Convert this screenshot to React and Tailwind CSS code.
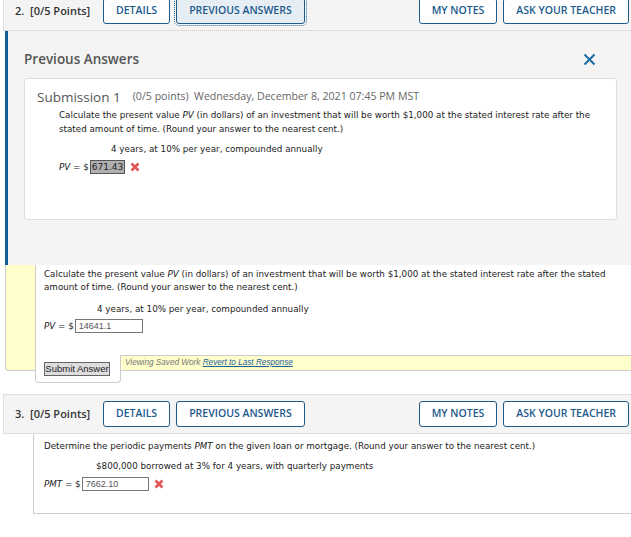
import React from 'react'

const open = { fontFamily: '"Open Sans", "Noto Sans", sans-serif' }
const body = { fontFamily: '"DejaVu Sans", Verdana, sans-serif' }
const arial = { fontFamily: '"Liberation Sans", Arial, sans-serif' }

function RedX() {
    return (
        <svg width="10" height="10" viewBox="0 0 10 10" className="ml-[5px] shrink-0">
            <path d="M1.5 1.5 L8.5 8.5 M8.5 1.5 L1.5 8.5" stroke="#e45656" strokeWidth="2.6" />
        </svg>
    )
}

function HeaderBar({ number, active, className }) {
    const btn = "h-[26px] px-[12px] border border-[#1f5a88] rounded-[3px] text-[10.5px] font-semibold text-[#1c5a8c] flex items-center"
    return (
        <div style={open} className={"h-[40px] ml-[3px] bg-[#f4f4f4] border-t border-b border-l border-[#dddddd] flex items-center " + className}>
            <span className="ml-[11px] w-[88px] shrink-0 text-[11px] font-semibold text-[#333] whitespace-nowrap">{number}.&nbsp; [0/5 Points]</span>
            <button className={btn + " bg-white"}>DETAILS</button>
            <button className={btn + " ml-[6px] " + (active ? "bg-[#e6edf3] outline-1 outline-dotted outline-[#1f6fb0] outline-offset-1" : "bg-white")}>PREVIOUS ANSWERS</button>
            <div className="flex-1" />
            <button className={btn + " bg-white"}>MY NOTES</button>
            <button className={btn + " bg-white ml-[6px] mr-[2px]"}>ASK YOUR TEACHER</button>
        </div>
    )
}

function App() {
    return (
        <div className="w-[631px] h-[537px] overflow-hidden bg-white text-[#222]">
            <HeaderBar number="2" active className="-mt-[9px]" />

            {/* previous answers panel */}
            <div className="ml-[5px] h-[234px] bg-[#f4f4f4] border-l-[3px] border-[#0f5d94] pt-[18px] pl-[16px] pr-[14px]">
                <div style={open} className="h-[20px] flex items-center justify-between">
                    <span className="text-[13.5px] font-semibold text-[#555]">Previous Answers</span>
                    <svg width="13" height="13" viewBox="0 0 13 13" className="mr-[21px]">
                        <path d="M1.5 1.5 L11.5 11.5 M11.5 1.5 L1.5 11.5" stroke="#1c6aa0" strokeWidth="2" />
                    </svg>
                </div>
                <div className="mt-[9px] h-[142px] bg-white border border-[#dddddd] rounded-[3px] pt-[8px] pl-[12px]">
                    <div style={open} className="h-[20px] flex items-center whitespace-nowrap">
                        <span className="text-[13.5px] text-[#555]">Submission 1</span>
                        <span className="ml-[12px] text-[10.6px] text-[#666]">(0/5 points)&nbsp; Wednesday, December 8, 2021 07:45 PM MST</span>
                    </div>
                    <div style={body} className="ml-[22px] pt-[1px] text-[8.75px] leading-[14px] whitespace-nowrap">
                        <div>Calculate the present value <i>PV</i> (in dollars) of an investment that will be worth $1,000 at the stated interest rate after the</div>
                        <div>stated amount of time. (Round your answer to the nearest cent.)</div>
                        <div className="mt-[6px] ml-[52px]">4 years, at 10% per year, compounded annually</div>
                        <div className="mt-[4px] flex items-center">
                            <span><i>PV</i> = $</span>
                            <span className="ml-[1px] h-[14px] px-[1px] bg-[#b0b0b0] border border-[#555] flex items-center text-[9px]">671.43</span>
                            <RedX />
                        </div>
                    </div>
                </div>
            </div>

            {/* current question 2 */}
            <div className="flex ml-[5px]">
                <div className="w-[30px] h-[106px] bg-[#ffffcc] border-l border-b border-[#cccccc] rounded-bl-[4px]" />
                <div className="flex-1">
                    <div style={body} className="h-[90px] bg-white border-l border-[#cccccc] pl-[8px] pt-[3px] text-[8.75px] leading-[13px] whitespace-nowrap">
                        <div>Calculate the present value <i>PV</i> (in dollars) of an investment that will be worth $1,000 at the stated interest rate after the stated</div>
                        <div>amount of time. (Round your answer to the nearest cent.)</div>
                        <div className="mt-[9px] ml-[53px]">4 years, at 10% per year, compounded annually</div>
                        <div className="mt-[3px] flex items-center">
                            <span><i>PV</i> = $</span>
                            <span style={arial} className="ml-[1px] w-[68px] h-[14px] border border-[#777] pl-[3px] flex items-center text-[9px] text-[#555]">14641.1</span>
                        </div>
                    </div>
                    <div className="flex items-start">
                        <div className="w-[86px] h-[28px] bg-white border-l border-r border-b border-[#cccccc] rounded-b-[4px] pl-[8px] pt-[7px] flex items-start">
                            <button style={arial} className="h-[14px] w-[66px] bg-[#dddddd] border border-[#666] text-[9.5px] text-[#222] leading-none">Submit Answer</button>
                        </div>
                        <div style={arial} className="flex-1 h-[16px] bg-[#ffffcc] border-t border-b border-[#cccccc] pl-[4px] flex items-center text-[8.2px] italic text-[#777] whitespace-nowrap">
                            Viewing Saved Work&nbsp;<span className="text-[#1a5e9e] underline">Revert to Last Response</span>
                        </div>
                    </div>
                </div>
            </div>

            {/* question 3 */}
            <HeaderBar number="3" className="mt-[11px]" />
            <div style={body} className="ml-[33px] h-[80px] border-l border-b border-[#cccccc] pl-[10px] pt-[5px] text-[8.75px] leading-[14px] whitespace-nowrap">
                <div>Determine the periodic payments <i>PMT</i> on the given loan or mortgage. (Round your answer to the nearest cent.)</div>
                <div className="mt-[6px] ml-[52px]">$800,000 borrowed at 3% for 4 years, with quarterly payments</div>
                <div className="mt-[4px] flex items-center">
                    <span><i>PMT</i> = $</span>
                    <span style={arial} className="ml-[1px] w-[67px] h-[14px] border border-[#777] pl-[3px] flex items-center text-[9px] text-[#555]">7662.10</span>
                    <RedX />
                </div>
            </div>
        </div>
    )
}

export default App
